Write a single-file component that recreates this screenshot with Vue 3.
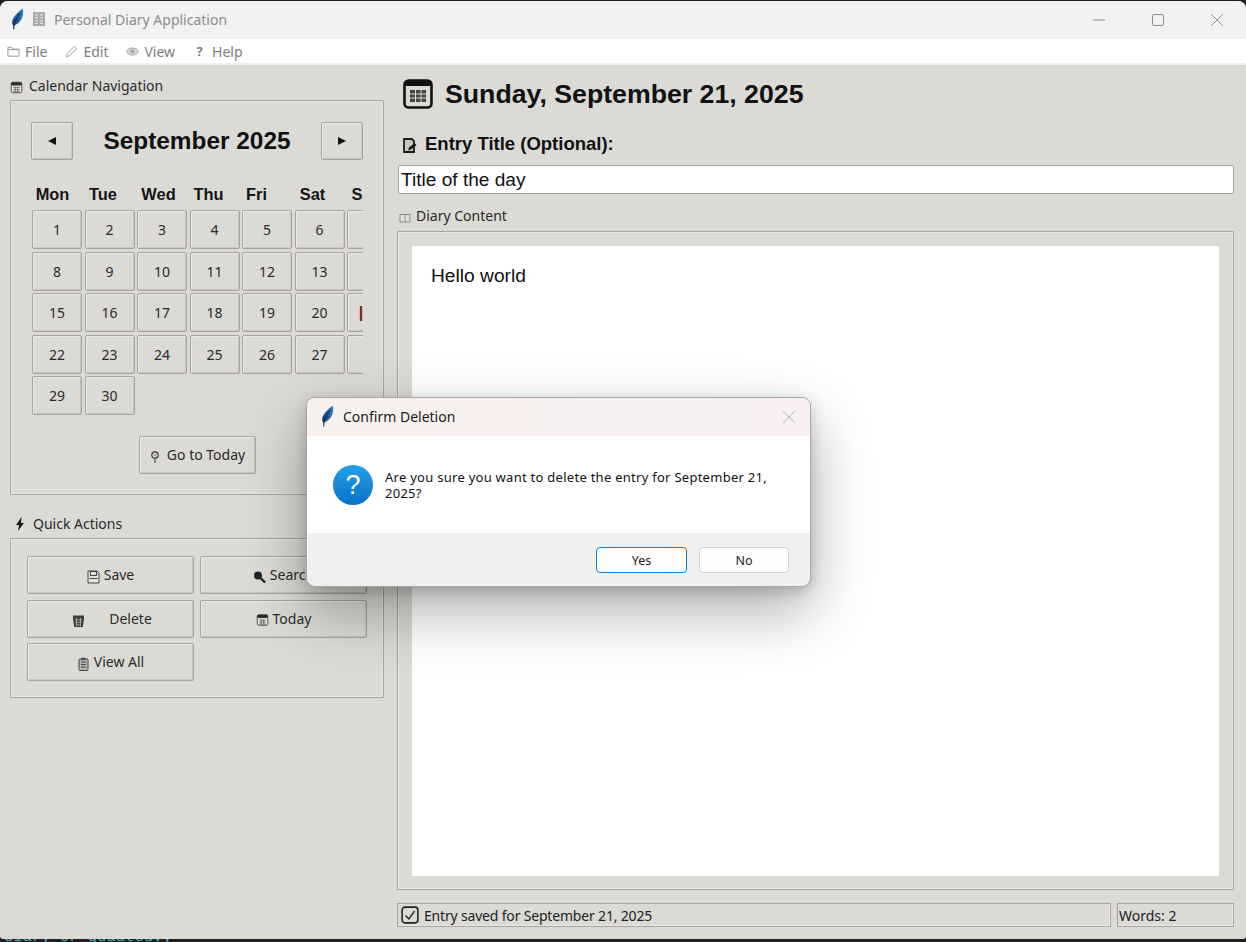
<script setup>
const weeks = [
  ['1', '2', '3', '4', '5', '6', '7'],
  ['8', '9', '10', '11', '12', '13', '14'],
  ['15', '16', '17', '18', '19', '20', '|21|'],
  ['22', '23', '24', '25', '26', '27', '28'],
  ['29', '30'],
]
const days = ['Mon', 'Tue', 'Wed', 'Thu', 'Fri', 'Sat', 'S']
</script>

<template>
  <div class="screen">
    <svg class="sprite" aria-hidden="true">
      <defs>
        <linearGradient id="leaf" x1="1" y1="0" x2="0" y2="1">
          <stop offset="0" stop-color="#3d9be8" />
          <stop offset=".55" stop-color="#1f5f9e" />
          <stop offset="1" stop-color="#0f2238" />
        </linearGradient>
        <linearGradient id="qmark" x1="0" y1="0" x2="0" y2="1">
          <stop offset="0" stop-color="#23a0e8" />
          <stop offset="1" stop-color="#0672c8" />
        </linearGradient>
        <symbol id="feather" viewBox="0 0 14 22">
          <path d="M3.200 21.500 3.300 17.500C.8 15 2 8 12.800.5 14.200 6 12.500 13 6.500 16.200L4.600 17.300 4.200 21.500Z" fill="url(#leaf)" />
          <path d="M3.800 18C5 12 8 7 11.800 2.500M5 13.500 8.500 11.500M6 10.500 10 9M7.500 7.500 11.500 6" fill="none" stroke="#0d2036" stroke-width=".7" />
        </symbol>
        <symbol id="cal" viewBox="0 0 16 16">
          <rect x="1.500" y="1.500" width="13" height="13" rx="2" fill="#e4e3df" stroke="#3a3a3a" />
          <rect x="1.500" y="1.500" width="13" height="4" rx="1.500" fill="#2d2d2d" />
          <path d="M4 8h8M4 10.500h8M4 13h8M6.500 7v7M9.500 7v7" stroke="#6d6d6d" fill="none" />
        </symbol>
        <symbol id="ledger" viewBox="0 0 14 16">
          <rect x="1" y="1" width="12" height="14" fill="#a9a9a6" />
          <path d="M3 4h3M8 4h3M3 7h3M8 7h3M3 10h3M8 10h3M3 12.500h3M8 12.500h3" stroke="#e8e8e8" fill="none" />
        </symbol>
        <symbol id="folder" viewBox="0 0 14 13">
          <path d="M1 11.500V2h4l1.500 2H13v7.500Z M1 4.500h12" fill="none" stroke="#9a8f8f" />
        </symbol>
        <symbol id="pencil" viewBox="0 0 14 14">
          <path d="M1.500 12.500 2.500 9 10 1.500 12.500 4 5 11.500Z" fill="none" stroke="#9a9a9a" />
        </symbol>
        <symbol id="eye" viewBox="0 0 14 10">
          <ellipse cx="7" cy="5" rx="6" ry="3.800" fill="#d7d7d7" stroke="#a0a0a0" />
          <circle cx="7" cy="5" r="2.200" fill="#a0a0a0" />
        </symbol>
        <symbol id="bolt" viewBox="0 0 10 14">
          <path d="M6.500 0 1 8h3L3 14l6-8H6Z" fill="#1a1a1a" />
        </symbol>
        <symbol id="pin" viewBox="0 0 10 14">
          <circle cx="5" cy="5" r="3.200" fill="none" stroke="#3a3a3a" stroke-width="1.200" />
          <path d="M5 8.500V13" stroke="#3a3a3a" fill="none" />
          <circle cx="5" cy="5" r="1" fill="#a8824a" />
        </symbol>
        <symbol id="floppy" viewBox="0 0 13 14">
          <path d="M1 1h9l2 2v10H1Z" fill="#e3e2de" stroke="#444" />
          <rect x="3.500" y="1.500" width="6" height="4" fill="none" stroke="#444" />
          <path d="M2.500 8.500h8" stroke="#444" />
        </symbol>
        <symbol id="loupe" viewBox="0 0 13 13">
          <circle cx="5" cy="5" r="4" fill="#222" />
          <path d="M7.500 7.500 12 12" stroke="#222" stroke-width="2.400" />
        </symbol>
        <symbol id="bin" viewBox="0 0 13 14">
          <path d="M1 1.500h11v3l-1.200 8.500H2.200L1 4.500Z" fill="#3b3b3b" />
          <path d="M3 6h7M3.500 8.500h6M4 11h5M4.500 4v8M8.500 4v8" stroke="#a5a5a0" fill="none" />
        </symbol>
        <symbol id="clip" viewBox="0 0 11 14">
          <rect x="1" y="2" width="9" height="11.500" rx="1" fill="#b5b4af" stroke="#444" />
          <path d="M3 5h5M3 7.500h5M3 10h5" stroke="#444" fill="none" />
          <rect x="3.500" y=".8" width="4" height="2" fill="#444" />
        </symbol>
        <symbol id="memo" viewBox="0 0 15 15">
          <path d="M2 1h8l2 2v11H2Z" fill="#c9c7c2" stroke="#1b1b1b" stroke-width="1.800" />
          <path d="M6 12.500 7 9.500 12.500 5l2 2L9 11.500Z" fill="#1b1b1b" />
        </symbol>
        <symbol id="book" viewBox="0 0 12 10">
          <path d="M1 1.500h10V9H1ZM6 1.500V9" fill="#e3e2de" stroke="#8a8a86" />
        </symbol>
      </defs>
    </svg>

    <div class="terminal">diary or quaatcuvy</div>

    <div class="window">
      <header class="titlebar">
        <svg class="tb-feather"><use href="#feather" /></svg>
        <svg class="tb-ledger"><use href="#ledger" /></svg>
        <span class="tb-title">Personal Diary Application</span>
        <div class="controls">
          <svg class="ctl" viewBox="0 0 12 12"><path d="M0 6h12" stroke="#8f8f8f" fill="none" /></svg>
          <svg class="ctl" viewBox="0 0 12 12"><rect x=".5" y=".5" width="11" height="11" rx="1.500" stroke="#8f8f8f" fill="none" /></svg>
          <svg class="ctl" viewBox="0 0 12 12"><path d="M0 0 12 12M12 0 0 12" stroke="#8f8f8f" fill="none" /></svg>
        </div>
      </header>

      <nav class="menubar">
        <span class="menu m-file"><svg class="mi"><use href="#folder" /></svg>File</span>
        <span class="menu m-edit"><svg class="mi"><use href="#pencil" /></svg>Edit</span>
        <span class="menu m-view"><svg class="mi"><use href="#eye" /></svg>View</span>
        <span class="menu m-help"><span class="qm">?</span>Help</span>
      </nav>

      <main class="body">
        <aside class="left">
          <div class="glabel g-cal"><svg class="gi"><use href="#cal" /></svg>Calendar Navigation</div>
          <section class="frame cal-frame">
            <div class="cal-nav">
              <button class="tk nav-btn"><span class="tri tri-l"></span></button>
              <h2 class="month">September 2025</h2>
              <button class="tk nav-btn"><span class="tri tri-r"></span></button>
            </div>
            <div class="clip">
              <div class="day-heads">
                <span v-for="d in days" :key="d">{{ d }}</span>
              </div>
              <div class="days">
                <template v-for="(w, i) in weeks" :key="i">
                  <button v-for="n in w" :key="n" class="tk day" :class="{ today: n === '|21|' }">{{ n }}</button>
                </template>
              </div>
            </div>
            <div class="today-row">
              <button class="tk go"><svg class="pin"><use href="#pin" /></svg>Go to Today</button>
            </div>
          </section>

          <div class="glabel g-quick"><svg class="bolt"><use href="#bolt" /></svg>Quick Actions</div>
          <section class="frame quick-frame">
            <button class="tk qa"><svg class="qi"><use href="#floppy" /></svg>Save</button>
            <button class="tk qa"><svg class="qi"><use href="#loupe" /></svg>Search</button>
            <button class="tk qa del"><svg class="qi"><use href="#bin" /></svg>Delete</button>
            <button class="tk qa"><svg class="qi"><use href="#cal" /></svg>Today</button>
            <button class="tk qa"><svg class="qi"><use href="#clip" /></svg>View All</button>
          </section>
        </aside>

        <section class="right">
          <div class="head">
            <svg class="big-cal" viewBox="0 0 30 30">
              <rect x="1.500" y="1.500" width="27" height="27" rx="4" fill="#dcdad5" stroke="#111" stroke-width="2.600" />
              <path d="M2 7V5a3 3 0 0 1 3-3h20a3 3 0 0 1 3 3v2Z" fill="#111" />
              <path d="M7 11h16v12H7Z" fill="#444" />
              <path d="M7 15h16M7 19h16M12.500 11v12M18 11v12" stroke="#dcdad5" fill="none" />
            </svg>
            <h1>Sunday, September 21, 2025</h1>
          </div>
          <div class="title-label"><svg class="memo"><use href="#memo" /></svg>Entry Title (Optional):</div>
          <div class="input">Title of the day</div>
          <div class="glabel g-diary"><svg class="book"><use href="#book" /></svg>Diary Content</div>
          <section class="frame diary-frame">
            <div class="paper">Hello world</div>
          </section>
          <footer class="status">
            <div class="st st-main">
              <svg class="check" viewBox="0 0 16 16">
                <rect x="1" y="1" width="14" height="14" rx="2.500" fill="none" stroke="#222" stroke-width="1.400" />
                <path d="M4 8.500 7 11.500 12 4.500" fill="none" stroke="#222" stroke-width="1.300" />
              </svg>
              Entry saved for September 21, 2025
            </div>
            <div class="st st-words">Words: 2</div>
          </footer>
        </section>
      </main>
    </div>

    <div class="dialog">
      <div class="d-title">
        <svg class="d-feather"><use href="#feather" /></svg>
        <span>Confirm Deletion</span>
        <svg class="d-x" viewBox="0 0 12 12"><path d="M0 0 12 12M12 0 0 12" stroke="#b3b0b2" fill="none" /></svg>
      </div>
      <div class="d-body">
        <svg class="d-q" viewBox="0 0 40 40">
          <circle cx="20" cy="20" r="20" fill="url(#qmark)" />
          <text x="20" y="29" text-anchor="middle" class="d-q-mark">?</text>
        </svg>
        <p>Are you sure you want to delete the entry for September 21, 2025?</p>
      </div>
      <div class="d-foot">
        <button class="d-btn primary">Yes</button>
        <button class="d-btn">No</button>
      </div>
    </div>
  </div>
</template>

<style>
html, body { margin: 0; padding: 0; overflow: hidden; }
</style>

<style scoped>
.screen {
  position: relative;
  width: 1246px;
  height: 942px;
  overflow: hidden;
  background: #1d1f20;
  font-family: "Noto Sans", sans-serif;
  font-size: 14px;
  color: #222;
}
.sprite { position: absolute; width: 0; height: 0; }
.window {
  position: relative;
  margin-top: 1px;
  height: 938px;
  display: flex;
  flex-direction: column;
  background: #dcdad5;
  border-radius: 8px 8px 3px 3px;
  overflow: hidden;
}
.titlebar {
  height: 38px;
  flex: none;
  display: flex;
  align-items: center;
  background: #f2f2f2;
  color: #8c8c8c;
}
.tb-feather { width: 14px; height: 22px; margin-left: 10px; margin-top: -3px; }
.tb-ledger { width: 14px; height: 16px; margin-left: 8px; margin-top: -2px; }
.tb-title { margin-left: 8px; margin-top: -2px; font-size: 14px; }
.controls { margin-left: auto; display: flex; align-items: center; gap: 47px; padding-right: 23px; }
.ctl { width: 12px; height: 12px; }
.menubar {
  height: 24px;
  flex: none;
  display: flex;
  align-items: center;
  background: #fff;
  border-bottom: 2px solid #f0f0ee;
  color: #7d7d7d;
  font-size: 14px;
}
.menu { display: flex; align-items: center; }
.m-file { margin-left: 7px; }
.m-edit { margin-left: 18px; }
.m-view { margin-left: 18px; }
.m-help { margin-left: 20px; }
.mi { width: 13px; height: 13px; margin-right: 5px; }
.qm { width: 9px; margin-right: 8px; font-weight: 700; font-size: 13px; text-align: center; }

.body { flex: 1; min-height: 0; display: flex; padding-left: 10px; padding-right: 12px; }
.left { width: 374px; flex: none; }
.right { width: 837px; flex: none; margin-left: 13px; display: flex; flex-direction: column; }

.glabel { display: flex; align-items: center; line-height: 20px; color: #2a2a2a; }
.gi { width: 13px; height: 13px; margin-right: 6px; margin-top: 3px; }
.g-cal { margin-top: 9px; margin-bottom: 2px; height: 24px; }
.frame {
  box-sizing: border-box;
  border: 1px solid #a7a49e;
  box-shadow: inset 0 0 0 1px #e6e5e1;
  border-radius: 1px;
}
.cal-frame { height: 395px; padding: 21px 20px 0 20px; }
.cal-nav { display: flex; align-items: center; justify-content: space-between; width: 332px; }
.tk {
  box-sizing: border-box;
  padding: 0;
  border: 1px solid #a7a49e;
  box-shadow: inset 1px 1px 0 #eceae6, inset -1px -1px 0 #c9c6c0;
  border-radius: 2px;
  background: #dcdad5;
  color: #2a2a2a;
  font-family: "Noto Sans", sans-serif;
  font-size: 14px;
}
.nav-btn { width: 42px; height: 38px; display: flex; align-items: center; justify-content: center; }
.tri { width: 0; height: 0; border-top: 4px solid transparent; border-bottom: 4px solid transparent; }
.tri-l { border-right: 8px solid #111; }
.tri-r { border-left: 8px solid #111; }
.month { margin: 0; font-family: "Liberation Sans", sans-serif; font-size: 24.400px; font-weight: 700; color: #111; }
.clip { width: 332px; overflow: hidden; margin-top: 23px; }
.day-heads {
  display: grid;
  grid-template-columns: 43px 58px 53px 47px 49px 63px 26px;
  height: 27px;
  line-height: 22px;
  text-align: center;
  font-family: "Liberation Sans", sans-serif;
  font-weight: 700;
  font-size: 16.400px;
  color: #151515;
}
.days {
  display: grid;
  grid-template-columns: repeat(7, 50px);
  column-gap: 2.500px;
  grid-auto-rows: 39px;
  row-gap: 2.500px;
  width: 380px;
  margin-left: 1px;
}
.day { width: 50px; height: 39px; }
.today { color: #7a1c08; font-weight: 700; font-family: "Liberation Sans", sans-serif; font-size: 16px; }
.today-row { display: flex; margin-top: 21px; padding-left: 108px; }
.go { width: 117px; height: 38px; display: flex; align-items: center; justify-content: center; padding-bottom: 2px; }
.pin { width: 10px; height: 14px; margin-right: 7px; margin-top: 5px; }

.g-quick { margin-top: 16px; margin-bottom: 2px; height: 25px; }
.bolt { width: 10px; height: 14px; margin-left: 5px; margin-right: 8px; }
.quick-frame {
  height: 160px;
  padding: 17px 16px 0 16px;
  display: grid;
  grid-template-columns: 167px 167px;
  column-gap: 6px;
  grid-auto-rows: 38px;
  row-gap: 5.500px;
}
.qa { display: flex; align-items: center; justify-content: center; padding-bottom: 1px; }
.qi { width: 13px; height: 14px; margin-right: 4px; margin-top: 4px; }
.del { padding-left: 3px; }
.del .qi { margin-right: 24px; margin-top: 5px; }

.head { display: flex; align-items: center; height: 58px; margin-left: 6px; }
.big-cal { width: 30px; height: 30px; }
h1 { margin: 0 0 0 12px; font-family: "Liberation Sans", sans-serif; font-size: 26.700px; font-weight: 700; color: #111; }
.title-label {
  display: flex;
  align-items: center;
  height: 28px;
  margin-top: 7px;
  margin-left: 5px;
  font-family: "Liberation Sans", sans-serif;
  font-weight: 700;
  font-size: 18.500px;
  color: #111;
}
.memo { width: 15px; height: 15px; margin-right: 8px; margin-top: 3px; }
.input {
  box-sizing: border-box;
  height: 29px;
  margin-top: 7px;
  margin-left: 1px;
  padding-left: 2px;
  border: 1px solid #a7a49e;
  border-radius: 2px;
  background: #fff;
  font-family: "Liberation Sans", sans-serif;
  font-size: 19.100px;
  line-height: 27px;
  color: #111;
}
.g-diary { margin-top: 9px; margin-bottom: 3px; height: 25px; margin-left: 2px; }
.book { width: 12px; height: 10px; margin-right: 5px; margin-top: 4px; }
.diary-frame { height: 659px; padding: 14px; flex: none; }
.paper {
  box-sizing: border-box;
  height: 630px;
  background: #fff;
  padding: 18px 19px;
  font-family: "Liberation Sans", sans-serif;
  font-size: 19.200px;
  line-height: 24px;
  color: #111;
}
.status { display: flex; gap: 6px; margin-top: 13px; }
.st {
  box-sizing: border-box;
  height: 24px;
  display: flex;
  align-items: center;
  border: 1px solid #a7a49e;
  box-shadow: inset -1px -1px 0 #eceae6;
  font-size: 14px;
  letter-spacing: -.18px;
  color: #222;
  padding-left: 3px;
}
.st-main { width: 714px; }
.st-words { width: 117px; letter-spacing: 0; padding-left: 1px; }
.check { width: 18px; height: 18px; margin-right: 5px; }

.terminal {
  position: absolute;
  left: 4px;
  top: 930px;
  font-family: "Liberation Mono", monospace;
  font-size: 15px;
  color: #5aa7c0;
  letter-spacing: .33px;
  line-height: 16px;
}

.dialog {
  position: absolute;
  left: 306px;
  top: 397px;
  box-sizing: border-box;
  width: 505px;
  height: 190px;
  display: flex;
  flex-direction: column;
  border: 1px solid #a9a8a6;
  border-radius: 9px;
  overflow: hidden;
  background: #f0f0f0;
  box-shadow: 0 24px 60px rgba(0, 0, 0, .32), 0 4px 14px rgba(0, 0, 0, .18);
  color: #1a1a1a;
}
.d-title {
  height: 38px;
  flex: none;
  display: flex;
  align-items: center;
  background: linear-gradient(90deg, #f8f1ec, #f7eff4);
}
.d-feather { width: 14px; height: 22px; margin-left: 13px; margin-top: -2px; }
.d-title span { margin-left: 9px; margin-top: -2px; font-size: 14px; }
.d-x { width: 12px; height: 12px; margin-left: auto; margin-right: 15px; }
.d-body { height: 97px; flex: none; display: flex; align-items: center; background: #fff; }
.d-q { width: 40px; height: 40px; margin-left: 26px; flex: none; }
.d-q-mark { font-family: "Liberation Sans", sans-serif; font-size: 27px; font-weight: 400; fill: #fff; }
.d-body p { margin: 0 0 0 12px; width: 405px; font-size: 13px; line-height: 16px; letter-spacing: .27px; color: #111; }
.d-foot { flex: 1; display: flex; justify-content: flex-end; align-items: center; gap: 12px; padding-right: 21px; padding-top: 1px; }
.d-btn {
  box-sizing: border-box;
  width: 90px;
  height: 26px;
  padding: 0;
  border: 1px solid #d0d0d0;
  border-radius: 4px;
  background: #fdfdfd;
  font-family: "Noto Sans", sans-serif;
  font-size: 12.500px;
  color: #222;
}
.primary { width: 91px; border: 1.500px solid #0f7fd6; }
</style>
